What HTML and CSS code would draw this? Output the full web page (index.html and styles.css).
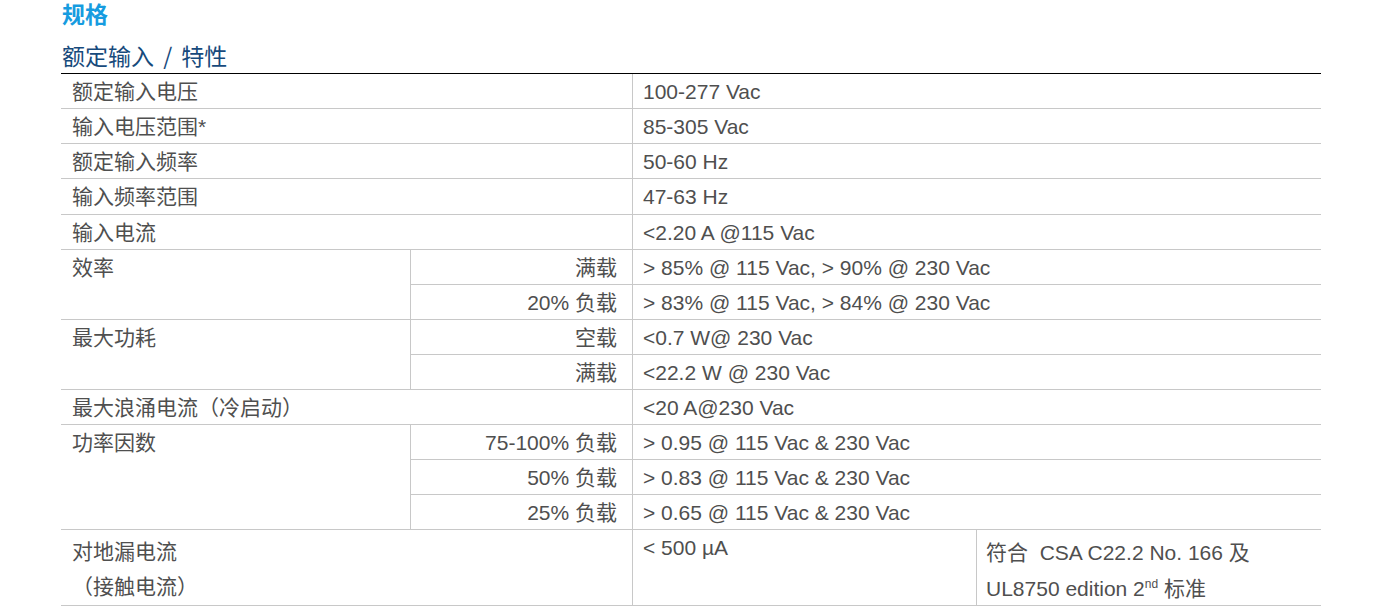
FILE: index.html
```html
<!DOCTYPE html>
<html lang="zh-CN">
<head>
<meta charset="utf-8">
<title>规格</title>
<link rel="stylesheet" href="styles.css">
</head>
<body>
<div class="page">
  <h1 class="title">规格</h1>
  <h2 class="subtitle">额定输入 / 特性</h2>
  <div class="spec">
    <div class="cell label">额定输入电压</div>
    <div class="cell val">100-277 Vac</div>

    <div class="cell label">输入电压范围*</div>
    <div class="cell val">85-305 Vac</div>

    <div class="cell label">额定输入频率</div>
    <div class="cell val">50-60 Hz</div>

    <div class="cell label">输入频率范围</div>
    <div class="cell val">47-63 Hz</div>

    <div class="cell label">输入电流</div>
    <div class="cell val">&lt;2.20 A @115 Vac</div>

    <div class="cell group rows2">效率</div>
    <div class="cell sub">满载</div>
    <div class="cell val">&gt; 85% @ 115 Vac, &gt; 90% @ 230 Vac</div>
    <div class="cell sub">20% 负载</div>
    <div class="cell val">&gt; 83% @ 115 Vac, &gt; 84% @ 230 Vac</div>

    <div class="cell group rows2">最大功耗</div>
    <div class="cell sub">空载</div>
    <div class="cell val">&lt;0.7 W@ 230 Vac</div>
    <div class="cell sub">满载</div>
    <div class="cell val">&lt;22.2 W @ 230 Vac</div>

    <div class="cell label">最大浪涌电流（冷启动）</div>
    <div class="cell val">&lt;20 A@230 Vac</div>

    <div class="cell group rows3">功率因数</div>
    <div class="cell sub">75-100% 负载</div>
    <div class="cell val">&gt; 0.95 @ 115 Vac &amp; 230 Vac</div>
    <div class="cell sub">50% 负载</div>
    <div class="cell val">&gt; 0.83 @ 115 Vac &amp; 230 Vac</div>
    <div class="cell sub">25% 负载</div>
    <div class="cell val">&gt; 0.65 @ 115 Vac &amp; 230 Vac</div>

    <div class="cell label tall">对地漏电流<br>（接触电流）</div>
    <div class="cell single">&lt; 500 µA</div>
    <div class="cell note">符合&nbsp; CSA C22.2 No. 166 及<br>UL8750 edition 2<sup>nd</sup> 标准</div>
  </div>
</div>
</body>
</html>
```
FILE: styles.css
```css
html, body {
  margin: 0;
  padding: 0;
  background: #ffffff;
}

body {
  font-family: "Liberation Sans", "Noto Sans CJK SC", sans-serif;
  color: #4f4f4f;
}

.page {
  padding-left: 61px;
  width: 1260px;
}

.title {
  margin: 0;
  height: 26px;
  line-height: 26px;
  padding-left: 1px;
  font-family: "Noto Sans CJK SC", sans-serif;
  font-size: 23px;
  font-weight: 700;
  color: #169ce0;
}

.subtitle {
  margin: 16px 0 0 0;
  height: 27px;
  line-height: 27px;
  padding: 0 0 4px 1px;
  font-family: "Noto Sans CJK SC", sans-serif;
  font-size: 23px;
  font-weight: 400;
  word-spacing: 4px;
  color: #174a7c;
}

.spec {
  display: grid;
  grid-template-columns: 349px 222px 344px 345px;
  grid-template-rows: 35px 35px 35px 36px 35px 35px 35px 35px 35px 35px 35px 35px 35px 76px;
  border-top: 1px solid #000000;
  font-size: 21px;
  line-height: 26px;
}

.cell {
  box-sizing: border-box;
  border-bottom: 1px solid #c8c8c8;
  padding: 5px 10px 0 11px;
  white-space: nowrap;
}

.label {
  grid-column: span 2;
}

.group.rows2 {
  grid-row: span 2;
}

.group.rows3 {
  grid-row: span 3;
}

.sub {
  border-left: 1px solid #c8c8c8;
  text-align: right;
  padding-right: 15px;
}

.val {
  grid-column: span 2;
  border-left: 1px solid #c8c8c8;
  padding-left: 10px;
}

.single {
  border-left: 1px solid #c8c8c8;
  padding-left: 10px;
}

.tall {
  line-height: 35px;
  padding-top: 4px;
}

.note {
  border-left: 1px solid #c8c8c8;
  line-height: 36px;
  padding-top: 5px;
  padding-left: 9px;
}

.note sup {
  font-size: 12px;
  line-height: 0;
  vertical-align: 8px;
}
```
